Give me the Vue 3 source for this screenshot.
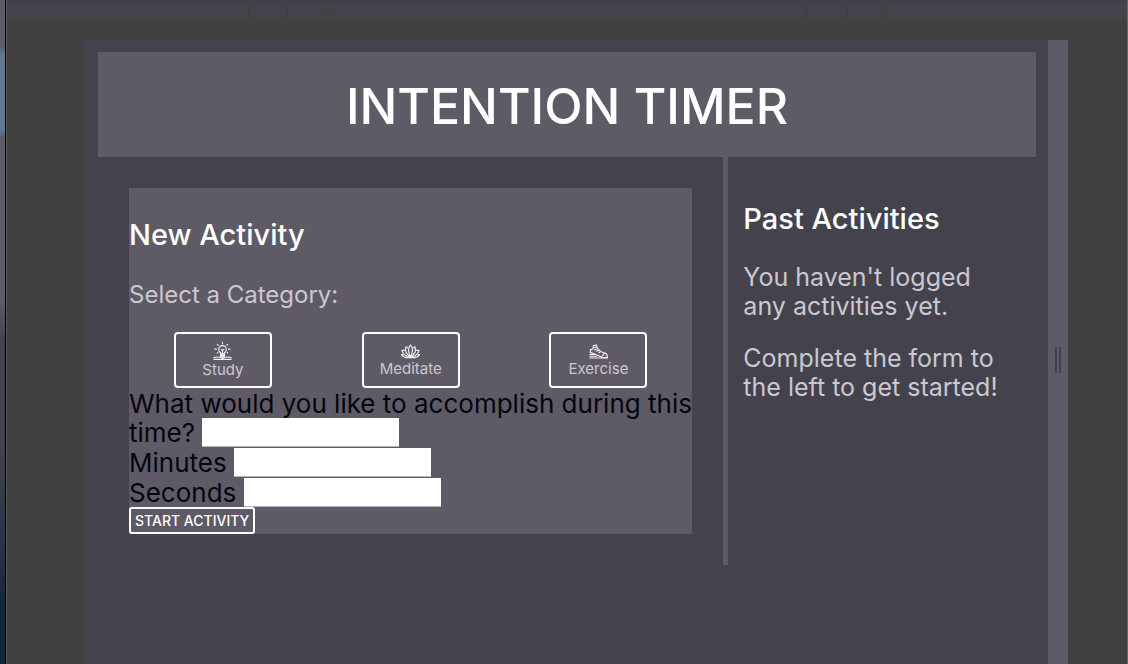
<script setup>
import { ref } from 'vue'

const categories = ['Study', 'Meditate', 'Exercise']
const selected = ref('')
const goal = ref('')
const minutes = ref('')
const seconds = ref('')
</script>

<template>
  <div class="window">
    <div class="backdrop" aria-hidden="true"></div>
    <div class="workspace">
      <div class="breakpoints" aria-hidden="true">
        <span class="wide"></span>
        <span class="tick"></span>
        <span class="tick inner"></span>
        <span class="middle"></span>
        <span class="tick inner"></span>
        <span class="tick"></span>
        <span class="wide"></span>
      </div>
      <div class="stage">
        <main class="app">
          <header class="banner">
            <h1>INTENTION TIMER</h1>
          </header>
          <div class="columns">
            <section class="left">
              <form class="card" @submit.prevent>
                <h2>New Activity</h2>
                <p class="prompt">Select a Category:</p>
                <div class="categories">
                  <button
                    v-for="name in categories"
                    :key="name"
                    type="button"
                    class="category"
                    :aria-pressed="selected === name"
                    @click="selected = name"
                  >
                    <svg v-if="name === 'Study'" class="icon tall" viewBox="0 0 20 19">
                      <path d="M10 0v2.500M4.300 2.300l1.500 1.500M15.700 2.300l-1.500 1.500M1.500 7.500h2.500M16 7.500h2.500M4 12l1.500-1.200M16 12l-1.500-1.200" />
                      <path d="M8 13.500v-2.200C6.500 10.400 6 9 6 7.800a4 4 0 0 1 8 0c0 1.200-.5 2.600-2 3.500v2.200z" />
                      <path d="M8.500 7.500L10 9l1.500-1.500M10 9v4.500" />
                      <path class="solid" d="M8 12.500h4v2.500l-1 1H9l-1-1z" />
                      <path d="M.5 16.500c3-.9 6.500-.9 9.500.6 3-1.500 6.500-1.500 9.500-.6M.5 18.300h19" />
                    </svg>
                    <svg v-else-if="name === 'Meditate'" class="icon" viewBox="0 0 20 15">
                      <path d="M10 .8C7.500 3.500 7 7.500 10 13c3-5.500 2.500-9.500 0-12.200z" />
                      <path d="M7.800 4L5.300 2.500C4 6.500 5.500 10.500 10 13M12.200 4l2.500-1.500C16 6.500 14.500 10.500 10 13" />
                      <path d="M4.800 6L1 6.500C2 10 4.500 12.500 10 13M15.200 6l3.800.5c-1 3.500-3.500 6-9 6.500" />
                      <path d="M2.500 10.500L.5 11c2 2.500 5 3.500 9.500 2.800 4.500.7 7.500-.3 9.500-2.800l-2-.5" />
                    </svg>
                    <svg v-else class="icon" viewBox="0 0 20 15">
                      <path d="M1.500 5.500C3.500 5.800 5 4.500 4.500 1.500L7.500.5c1.300 4 4.500 7.500 8.500 8.500 2.500.5 3.500 1.500 3.500 5h-4C11 13.500 7.500 10 1.500 8.500z" />
                      <path d="M5 3.500l3-.8M5.500 6l3.500-1.500M7.500 7.500l3-1.700M10 9l2.300-1.500M14 12.500l2-3.500" />
                      <path d="M.5 10.500h5.500M.5 12.500h8M.5 14.300h19" />
                    </svg>
                    <span>{{ name }}</span>
                  </button>
                </div>
                <div class="fields">
                  <label>What would you like to accomplish during this time? <input v-model="goal" type="text" /></label>
                  <label>Minutes <input v-model="minutes" type="text" /></label>
                  <label>Seconds <input v-model="seconds" type="text" /></label>
                </div>
                <button type="submit" class="start">START ACTIVITY</button>
              </form>
            </section>
            <aside class="past">
              <h2>Past Activities</h2>
              <p>You haven't logged<br />any activities yet.</p>
              <p>Complete the form to<br />the left to get started!</p>
            </aside>
          </div>
        </main>
        <div class="handle" aria-hidden="true"><i></i><i></i></div>
      </div>
    </div>
  </div>
</template>

<style>
html,
body {
  background: #414141;
}
</style>

<style scoped>
.window {
  display: flex;
  min-height: 100vh;
  background: #414141;
  font-family: Inter, "Liberation Sans", sans-serif;
}
.backdrop {
  flex: 0 0 5px;
  background: linear-gradient(#5f5b66 46px, #637694 54px, #637694 130px, #5f5b66 137px, #5f5b66 300px, #44434d 340px, #44434d 440px, #253047 560px, #13263c 600px);
  border-right: 1px solid #000;
}
.workspace {
  flex: 1;
  display: flex;
  flex-direction: column;
  min-width: 0;
  border-left: 1px solid #5a5a5a;
  border-right: 1px solid #6a6a6a;
}
.breakpoints {
  display: flex;
  gap: 2px;
  height: 16px;
  margin-top: 2px;
}
.breakpoints span {
  background: #44434d;
}
.wide {
  flex: 241;
}
.tick {
  flex: 36;
}
.inner {
  flex: 39;
}
.middle {
  flex: 477;
}
.stage {
  flex: 1;
  display: flex;
  margin: 22px 59px 0 78px;
}
.app {
  flex: 1;
  min-width: 0;
  padding: 12px 12px 0 13px;
  background: #44434d;
}
.banner {
  padding: 24px 0 20px;
  background: #5f5b66;
  text-align: center;
}
h1,
h2,
p {
  margin: 0;
}
h1 {
  color: #fff;
  font-size: 50px;
  line-height: 61px;
  font-weight: 500;
}
h2 {
  color: #fff;
  font-size: 29px;
  line-height: 35px;
  font-weight: 500;
}
p {
  color: #cbc8d0;
  font-size: 24px;
  line-height: 29px;
}
.columns {
  display: grid;
  grid-template-columns: calc(66.67% + 5px) 1fr;
}
.left {
  padding: 31px;
  border-right: 5px solid #5f5b66;
}
.card {
  padding-top: 29px;
  background: #5f5b66;
}
.prompt {
  margin: 28px 0 23px;
}
.categories {
  display: flex;
  justify-content: space-around;
}
.category {
  display: flex;
  flex-direction: column;
  align-items: center;
  justify-content: center;
  gap: 1px;
  width: 98px;
  height: 56px;
  padding: 0;
  border: 2px solid #fff;
  border-radius: 4px;
  background: transparent;
  color: #cbc8d0;
  font: 400 15px/17px Inter, sans-serif;
}
.icon {
  width: 19px;
  height: 15px;
  fill: none;
  stroke: #f2f1f4;
  stroke-width: 1.2;
}
.tall {
  height: 18px;
}
.solid {
  fill: #f2f1f4;
}
.fields {
  display: flex;
  flex-direction: column;
  gap: 1px;
  color: #050510;
  padding-top: 1px;
  font-size: 26px;
  line-height: 29px;
}
input {
  width: 197px;
  height: 29px;
  box-sizing: border-box;
  padding: 1px 4px;
  border: 0;
  border-bottom: 1px solid #b5b3b9;
  background: #fff;
  font: inherit;
  vertical-align: top;
}
.start {
  display: block;
  height: 27px;
  padding: 0 4px;
  border: 2px solid #fff;
  border-radius: 3px;
  background: transparent;
  color: #fff;
  font: 500 14px/23px Inter, sans-serif;
}
.past {
  padding: 44px 0 0 15px;
}
.past p {
  margin-top: 27px;
  font-size: 25px;
}
.past p + p {
  margin-top: 23px;
}
.handle {
  flex: 0 0 20px;
  display: flex;
  align-items: center;
  justify-content: center;
  gap: 2px;
  box-sizing: border-box;
  padding-top: 16px;
  background: #5f5b66;
}
.handle i {
  width: 2px;
  height: 26px;
  background: #44434d;
}
</style>
